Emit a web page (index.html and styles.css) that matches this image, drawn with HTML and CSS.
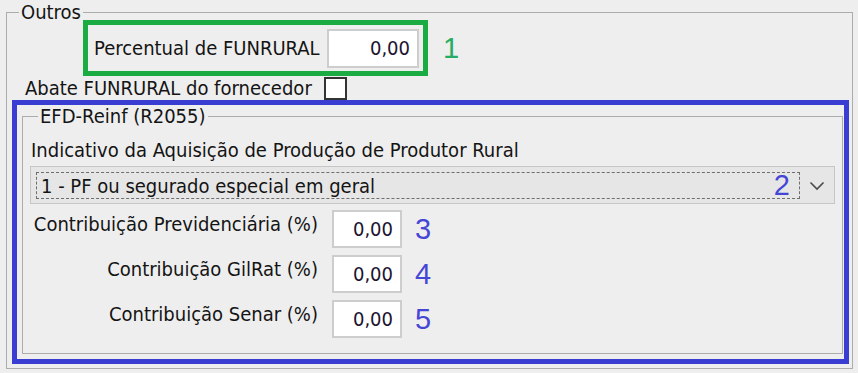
FILE: index.html
```html
<!DOCTYPE html>
<html lang="pt-BR">
<head>
    <meta charset="UTF-8">
    <meta name="viewport" content="width=device-width, initial-scale=1.0">
    <title>Outros - FUNRURAL</title>
    <link rel="stylesheet" href="styles.css">
</head>
<body>
    <fieldset class="group outer">
        <legend>Outros</legend>

        <div class="funrural-row">
            <div class="mark-green">
                <span class="label">Percentual de FUNRURAL</span>
                <input class="num-input big" type="text" value="0,00">
            </div>
            <span class="marker green">1</span>
        </div>

        <div class="check-row">
            <span class="label">Abate FUNRURAL do fornecedor</span>
            <span class="checkbox"></span>
        </div>

        <div class="mark-blue">
            <fieldset class="group reinf">
                <legend>EFD-Reinf (R2055)</legend>

                <div class="field-title">Indicativo da Aquisição de Produção de Produtor Rural</div>

                <div class="combo">
                    <div class="combo-value">
                        <span>1 - PF ou segurado especial em geral</span>
                        <span class="marker blue">2</span>
                    </div>
                    <div class="combo-arrow">
                        <svg width="16" height="10" viewBox="0 0 16 10">
                            <polyline points="1.5,1.5 8,8 14.5,1.5" fill="none" stroke="#4a4a4a" stroke-width="1.6"/>
                        </svg>
                    </div>
                </div>

                <div class="rates">
                    <span class="rate-label">Contribuição Previdenciária (%)</span>
                    <input class="num-input" type="text" value="0,00">
                    <span class="marker blue">3</span>

                    <span class="rate-label">Contribuição GilRat (%)</span>
                    <input class="num-input" type="text" value="0,00">
                    <span class="marker blue">4</span>

                    <span class="rate-label">Contribuição Senar (%)</span>
                    <input class="num-input" type="text" value="0,00">
                    <span class="marker blue">5</span>
                </div>
            </fieldset>
        </div>
    </fieldset>
</body>
</html>
```

FILE: styles.css
```css
body {
    margin: 0;
    width: 858px;
    height: 373px;
    overflow: hidden;
    background-color: #eeeeee;
    font-family: "DejaVu Sans Condensed", "DejaVu Sans", sans-serif;
    font-size: 20px;
    color: #141414;
}

.group {
    box-sizing: border-box;
    min-width: 0;
    margin: 0;
    padding: 0;
    border: 1px solid #acacac;
}

.group legend {
    padding: 0 2px;
}

.outer {
    margin-left: 6px;
    width: 847px;
    height: 369px;
}

.outer legend {
    margin-left: 12px;
    line-height: 24px;
}

.funrural-row {
    display: flex;
    align-items: center;
    margin-top: -4px;
    margin-left: 76px;
}

.mark-green {
    box-sizing: border-box;
    display: flex;
    align-items: center;
    width: 345px;
    height: 56px;
    padding: 0 4px 0 6px;
    border: 5px solid #1bab43;
}

.num-input {
    box-sizing: border-box;
    width: 70px;
    height: 38px;
    padding: 0 7px;
    border: 2px solid #cdcdcd;
    background-color: #fff;
    font: inherit;
    color: #1c1430;
    text-align: right;
}

.num-input.big {
    width: 92px;
    height: 39px;
    margin-left: auto;
}

.marker {
    font-family: "Liberation Sans", Arial, sans-serif;
    font-size: 29px;
    line-height: 1;
}

.marker.green {
    margin-left: 15px;
    color: #24ad62;
}

.marker.blue {
    color: #4646d6;
}

.check-row {
    display: flex;
    align-items: center;
    gap: 12px;
    height: 24px;
    padding-left: 18px;
}

.checkbox {
    box-sizing: border-box;
    width: 23px;
    height: 23px;
    border: 2px solid #333;
    background-color: #fff;
}

.mark-blue {
    box-sizing: border-box;
    width: 837px;
    height: 264px;
    margin-left: 5px;
    padding-left: 5px;
    border: 5px solid #3a3dd2;
}

.reinf {
    width: 821px;
    height: 249px;
    padding-left: 7px;
}

.reinf legend {
    margin-left: 8px;
    line-height: 22px;
}

.field-title {
    margin-top: 12px;
    padding-left: 1px;
    line-height: 22px;
}

.combo {
    box-sizing: border-box;
    display: flex;
    width: 805px;
    height: 38px;
    margin-top: 5px;
    padding: 5px 0 4px 5px;
    border: 1px solid #c6c6c6;
    background-color: #e6e6e6;
}

.combo-value {
    flex: 1;
    display: flex;
    align-items: center;
    justify-content: space-between;
    padding: 0 9px 0 4px;
    border: 1px dashed #6e6e6e;
}

.combo-arrow {
    display: flex;
    align-items: center;
    justify-content: center;
    width: 34px;
}

.rates {
    display: grid;
    grid-template-columns: 288px 70px auto;
    column-gap: 14px;
    row-gap: 7px;
    margin-top: 6px;
}

.rate-label {
    align-self: start;
    padding-top: 3px;
    line-height: 22px;
    text-align: right;
}

.rates .marker {
    align-self: center;
    margin-left: -1px;
}
```
